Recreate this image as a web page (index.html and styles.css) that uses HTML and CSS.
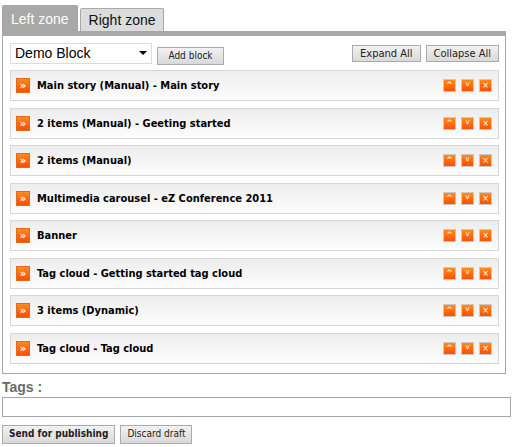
FILE: index.html
```html
<!DOCTYPE html>
<html>
<head>
<meta charset="utf-8">
<link rel="stylesheet" href="styles.css">
</head>
<body>
<div class="page">
  <div class="tabs">
    <div class="tab active">Left zone</div>
    <div class="tab">Right zone</div>
  </div>
  <div class="panel">
    <div class="toolbar">
      <div class="select">Demo Block<span class="caret"></span></div>
      <button class="btn small add">Add block</button>
      <div class="spacer"></div>
      <button class="btn small">Expand All</button>
      <button class="btn small">Collapse All</button>
    </div>
    <div class="blocks">
      <div class="block"><span class="exp">»</span><span class="title">Main story (Manual) - Main story</span><span class="acts"><span class="act">^</span><span class="act dn">v</span><span class="act">×</span></span></div>
      <div class="block"><span class="exp">»</span><span class="title">2 items (Manual) - Geeting started</span><span class="acts"><span class="act">^</span><span class="act dn">v</span><span class="act">×</span></span></div>
      <div class="block"><span class="exp">»</span><span class="title">2 items (Manual)</span><span class="acts"><span class="act">^</span><span class="act dn">v</span><span class="act">×</span></span></div>
      <div class="block"><span class="exp">»</span><span class="title">Multimedia carousel - eZ Conference 2011</span><span class="acts"><span class="act">^</span><span class="act dn">v</span><span class="act">×</span></span></div>
      <div class="block"><span class="exp">»</span><span class="title">Banner</span><span class="acts"><span class="act">^</span><span class="act dn">v</span><span class="act">×</span></span></div>
      <div class="block"><span class="exp">»</span><span class="title">Tag cloud - Getting started tag cloud</span><span class="acts"><span class="act">^</span><span class="act dn">v</span><span class="act">×</span></span></div>
      <div class="block"><span class="exp">»</span><span class="title">3 items (Dynamic)</span><span class="acts"><span class="act">^</span><span class="act dn">v</span><span class="act">×</span></span></div>
      <div class="block"><span class="exp">»</span><span class="title">Tag cloud - Tag cloud</span><span class="acts"><span class="act">^</span><span class="act dn">v</span><span class="act">×</span></span></div>
    </div>
  </div>
  <div class="tags">
    <div class="tags-label">Tags :</div>
    <div class="tags-input"></div>
  </div>
  <div class="footer">
    <button class="btn big bold">Send for publishing</button>
    <button class="btn big">Discard draft</button>
  </div>
</div>
</body>
</html>
```
FILE: styles.css
```css
html, body { margin: 0; padding: 0; background: #fff; }
body { font-family: "DejaVu Sans", Verdana, sans-serif; color: #000; }
.page { padding: 5px 3px 0 2px; width: 509px; box-sizing: border-box; }
.tabs { display: flex; align-items: flex-end; gap: 2px; height: 26px; }
.tab {
  font-family: "Liberation Sans", Arial, sans-serif; font-size: 14px; white-space: nowrap;
  box-sizing: border-box; height: 23px; padding: 0 7px 0 8px; line-height: 22px;
  background: #dcdcdc; border: 1px solid #a9a9a9; border-bottom: none;
  border-radius: 2px 2px 0 0; color: #111;
}
.tab.active { height: 26px; line-height: 26px; background: #a8a8a8; border-color: #a8a8a8; color: #fff; padding: 0 8px 0 8px; }
.panel {
  border: 1px solid #a8a8a8; border-top: 5px solid #a8a8a8;
  padding: 7px 6px 9px 7px;
}
.toolbar { display: flex; align-items: flex-start; gap: 5px; height: 21px; }
.select {
  position: relative; box-sizing: border-box; width: 142px; height: 21px;
  border: 1px solid #dcdcdc; font-family: "Liberation Sans", Arial, sans-serif;
  font-size: 14px; line-height: 19px; padding-left: 4px;
}
.caret {
  position: absolute; right: 4px; top: 7px; width: 0; height: 0;
  border-left: 4px solid transparent; border-right: 4px solid transparent; border-top: 4px solid #000;
}
.spacer { flex: 1; }
.btn {
  font-family: "DejaVu Sans Condensed", "DejaVu Sans", Verdana, sans-serif; box-sizing: border-box;
  background: linear-gradient(#f2f2f2, #d9d9d9); border: 1px solid #ababab;
  color: #222; padding: 0 7px; margin: 0; cursor: pointer; white-space: nowrap;
}
.btn.small { font-size: 11px; height: 17px; line-height: 14px; margin-top: 2px; }
.btn.add { margin-top: 4px; height: 18px; width: 67px; padding: 0; font-size: 10px; }
.blocks { margin-top: 6px; display: flex; flex-direction: column; gap: 6.5px; }
.block {
  box-sizing: border-box; height: 31px; border: 1px solid #d6d6d6;
  background: linear-gradient(#ededed, #fdfdfd);
  display: flex; align-items: center; padding: 0 6px 0 5px;
}
.exp {
  width: 14px; height: 15px; box-sizing: border-box;
  background: linear-gradient(#ff8a20, #ff4d00); color: #fff;
  font-size: 10px; line-height: 13px; text-align: center;
  border: 1px solid #e06a20; font-weight: bold;
}
.title { font-family: "DejaVu Sans Condensed", "DejaVu Sans", sans-serif; font-weight: bold; font-size: 11px; margin-left: 7px; flex: 1; white-space: nowrap; }
.acts { display: flex; gap: 5px; }
.act {
  width: 13px; height: 13px; box-sizing: border-box;
  background: linear-gradient(#ff8c1a, #ff4f00); border: 1px solid #c9c9c9;
  color: #fff; font-size: 8px; line-height: 12px; text-align: center;
  font-family: "DejaVu Sans", sans-serif;
}
.act.dn { font-size: 7px; line-height: 9px; }
.tags { margin-top: 5px; }
.tags-label {
  font-family: "Liberation Sans", Arial, sans-serif; font-size: 14px; font-weight: bold;
  color: #6a6a6a; line-height: 16px;
}
.tags-input { margin-top: 2px; height: 20px; box-sizing: border-box; border: 1px solid #a3a7ab; width: 509px; }
.footer { margin-top: 8px; display: flex; gap: 5px; }
.btn.big { font-size: 10px; height: 19px; line-height: 16px; padding: 0 6px; }
.btn.bold { font-weight: bold; }
```
